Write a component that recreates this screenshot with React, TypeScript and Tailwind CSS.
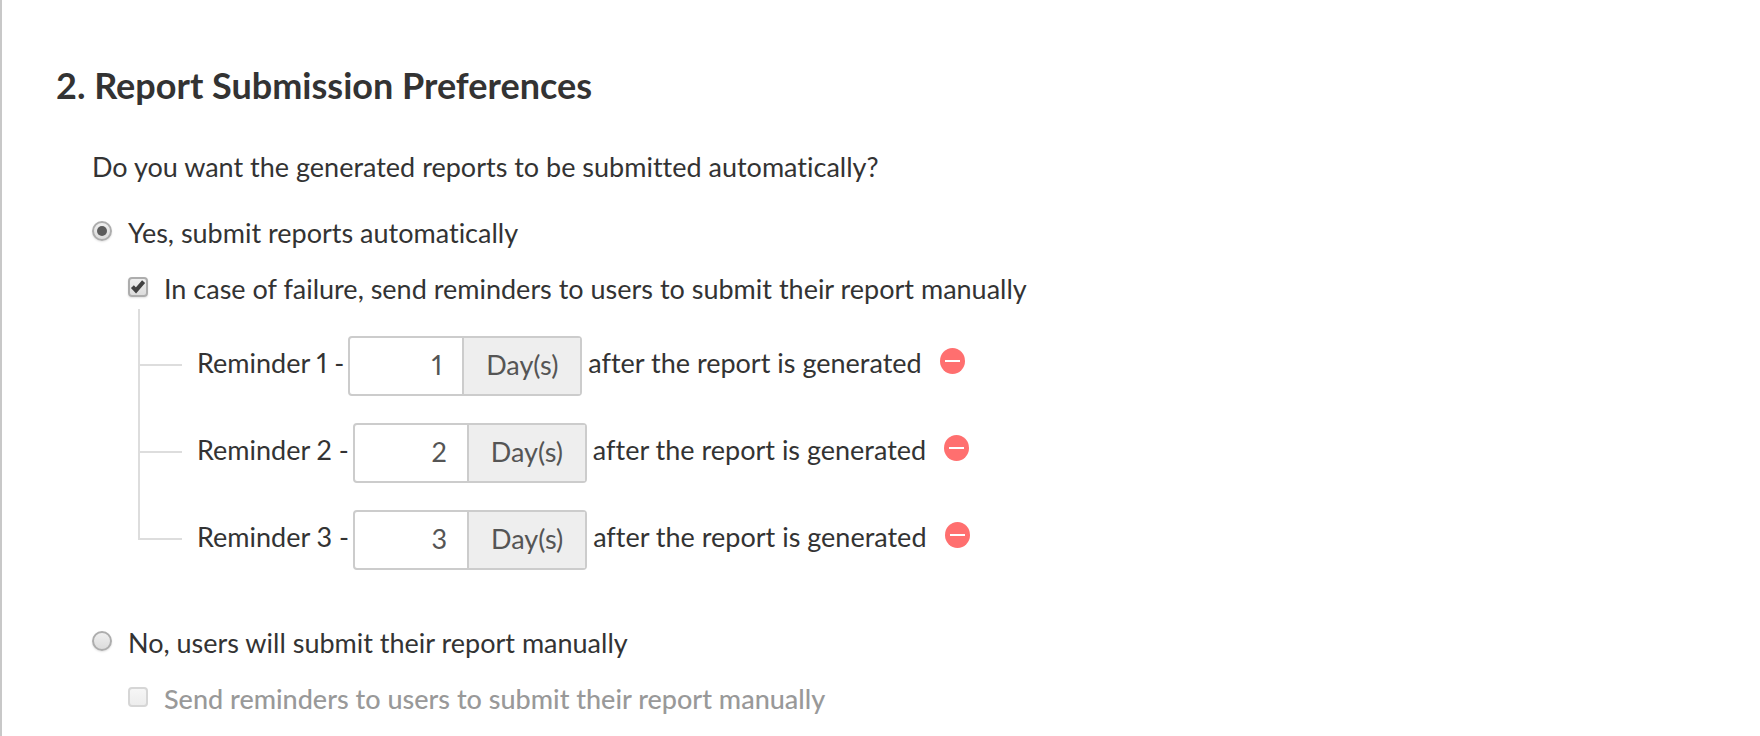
import { useState, type ReactNode } from 'react';
import clsx from 'clsx';

type Reminder = {
  id: number;
  days: string;
};

const controlClass =
  'peer block size-5 appearance-none border-2 border-[#adadad] bg-linear-to-b from-[#efefef] to-[#dcdcdc] shadow-[0_1px_2px_rgba(0,0,0,0.12)] disabled:border-[#d6d6d6] disabled:from-[#f6f6f6] disabled:to-[#ededed] disabled:shadow-none';

function Radio({ id, checked, onChange }: { id: string; checked: boolean; onChange: () => void }) {
  return (
    <span className="relative mt-1 shrink-0">
      <input
        id={id}
        type="radio"
        name="submission"
        checked={checked}
        onChange={onChange}
        className={clsx(controlClass, 'rounded-full')}
      />
      <span className="pointer-events-none absolute inset-[5px] hidden rounded-full bg-[#5c5c5c] peer-checked:block" />
    </span>
  );
}

function Checkbox({ id, checked, disabled, onChange }: {
  id: string;
  checked: boolean;
  disabled?: boolean;
  onChange: () => void;
}) {
  return (
    <span className="relative mt-1 shrink-0">
      <input
        id={id}
        type="checkbox"
        checked={checked}
        disabled={disabled}
        onChange={onChange}
        className={clsx(controlClass, 'rounded-[4px]')}
      />
      <svg
        viewBox="0 0 20 20"
        className="pointer-events-none absolute inset-0 hidden size-5 peer-checked:block"
      >
        <path d="M4.4 9.6 8 13.4 15.6 4.6" fill="none" stroke="#424242" strokeWidth="4" />
      </svg>
    </span>
  );
}

function Option({ control, htmlFor, muted, children }: {
  control: ReactNode;
  htmlFor: string;
  muted?: boolean;
  children: ReactNode;
}) {
  return (
    <div className="flex items-start gap-4">
      {control}
      <label htmlFor={htmlFor} className={clsx(muted && 'font-medium text-[#999]')}>
        {children}
      </label>
    </div>
  );
}

export default function App() {
  const [automatic, setAutomatic] = useState(true);
  const [remindOnFailure, setRemindOnFailure] = useState(true);
  const [remindManual, setRemindManual] = useState(false);
  const [reminders, setReminders] = useState<Reminder[]>([
    { id: 1, days: '1' },
    { id: 2, days: '2' },
    { id: 3, days: '3' }
  ]);

  const updateDays = (id: number, days: string) => {
    setReminders(reminders.map(r => (r.id === id ? { ...r, days } : r)));
  };

  return (
    <main className="min-h-screen border-l-2 border-[#c8c8c8] bg-white pt-[65px] pr-6 pb-5 pl-[54px] font-['Lato',sans-serif] text-[27px] leading-8 text-[#333] [font-variant-ligatures:none]">
      <h1 className="text-[36px] leading-10 font-bold">2. Report Submission Preferences</h1>

      <section className="mt-[46px] pl-9">
        <p>Do you want the generated reports to be submitted automatically?</p>

        {/* Automatic submission */}
        <div className="mt-[34px]">
          <Option
            htmlFor="auto"
            control={<Radio id="auto" checked={automatic} onChange={() => setAutomatic(true)} />}
          >
            Yes, submit reports automatically
          </Option>

          <div className="mt-6 pl-9">
            <Option
              htmlFor="failure"
              control={
                <Checkbox
                  id="failure"
                  checked={remindOnFailure}
                  disabled={!automatic}
                  onChange={() => setRemindOnFailure(!remindOnFailure)}
                />
              }
            >
              In case of failure, send reminders to users to submit their report manually
            </Option>

            <ul className="mt-1 ml-[10px] proportional-nums">
              {reminders.map((reminder, index) => (
                <li
                  key={reminder.id}
                  className="relative flex items-center pt-[27px] pl-[59px] before:absolute before:-top-[30px] before:bottom-[30px] before:left-0 before:w-11 before:border-b-2 before:border-l-2 before:border-[#ddd] first:before:top-0"
                >
                  <label htmlFor={`reminder-${reminder.id}`} className="pb-1.5">
                    Reminder {index + 1} -
                  </label>
                  <div className="mr-1.5 ml-1 flex h-[60px] w-[234px] rounded-[4px] border-2 border-[#ccc] text-[#555]">
                    <input
                      id={`reminder-${reminder.id}`}
                      type="text"
                      value={reminder.days}
                      onChange={e => updateDays(reminder.id, e.target.value)}
                      className="w-[114px] border-r-2 border-[#ccc] pr-5 pb-0.5 text-right outline-none"
                    />
                    <span className="flex flex-1 items-center justify-center bg-[#eee] pb-0.5">Day(s)</span>
                  </div>
                  <span className="pb-1.5">after the report is generated</span>
                  <button
                    type="button"
                    aria-label={`Remove reminder ${index + 1}`}
                    onClick={() => setReminders(reminders.filter(r => r.id !== reminder.id))}
                    className="mb-2.5 ml-[18px]"
                  >
                    <svg viewBox="0 0 25 26" className="h-[26px] w-[25px]">
                      <ellipse cx="12.5" cy="13" rx="12.5" ry="13" fill="#ff6f6f" />
                      <path d="M5 13h15" stroke="#fff" strokeWidth="2" />
                    </svg>
                  </button>
                </li>
              ))}
            </ul>
          </div>
        </div>

        {/* Manual submission */}
        <div className="mt-[57px]">
          <Option
            htmlFor="manual"
            control={<Radio id="manual" checked={!automatic} onChange={() => setAutomatic(false)} />}
          >
            No, users will submit their report manually
          </Option>

          <div className="mt-6 pl-9">
            <Option
              htmlFor="manual-reminders"
              muted={automatic}
              control={
                <Checkbox
                  id="manual-reminders"
                  checked={remindManual}
                  disabled={automatic}
                  onChange={() => setRemindManual(!remindManual)}
                />
              }
            >
              Send reminders to users to submit their report manually
            </Option>
          </div>
        </div>
      </section>
    </main>
  );
}
